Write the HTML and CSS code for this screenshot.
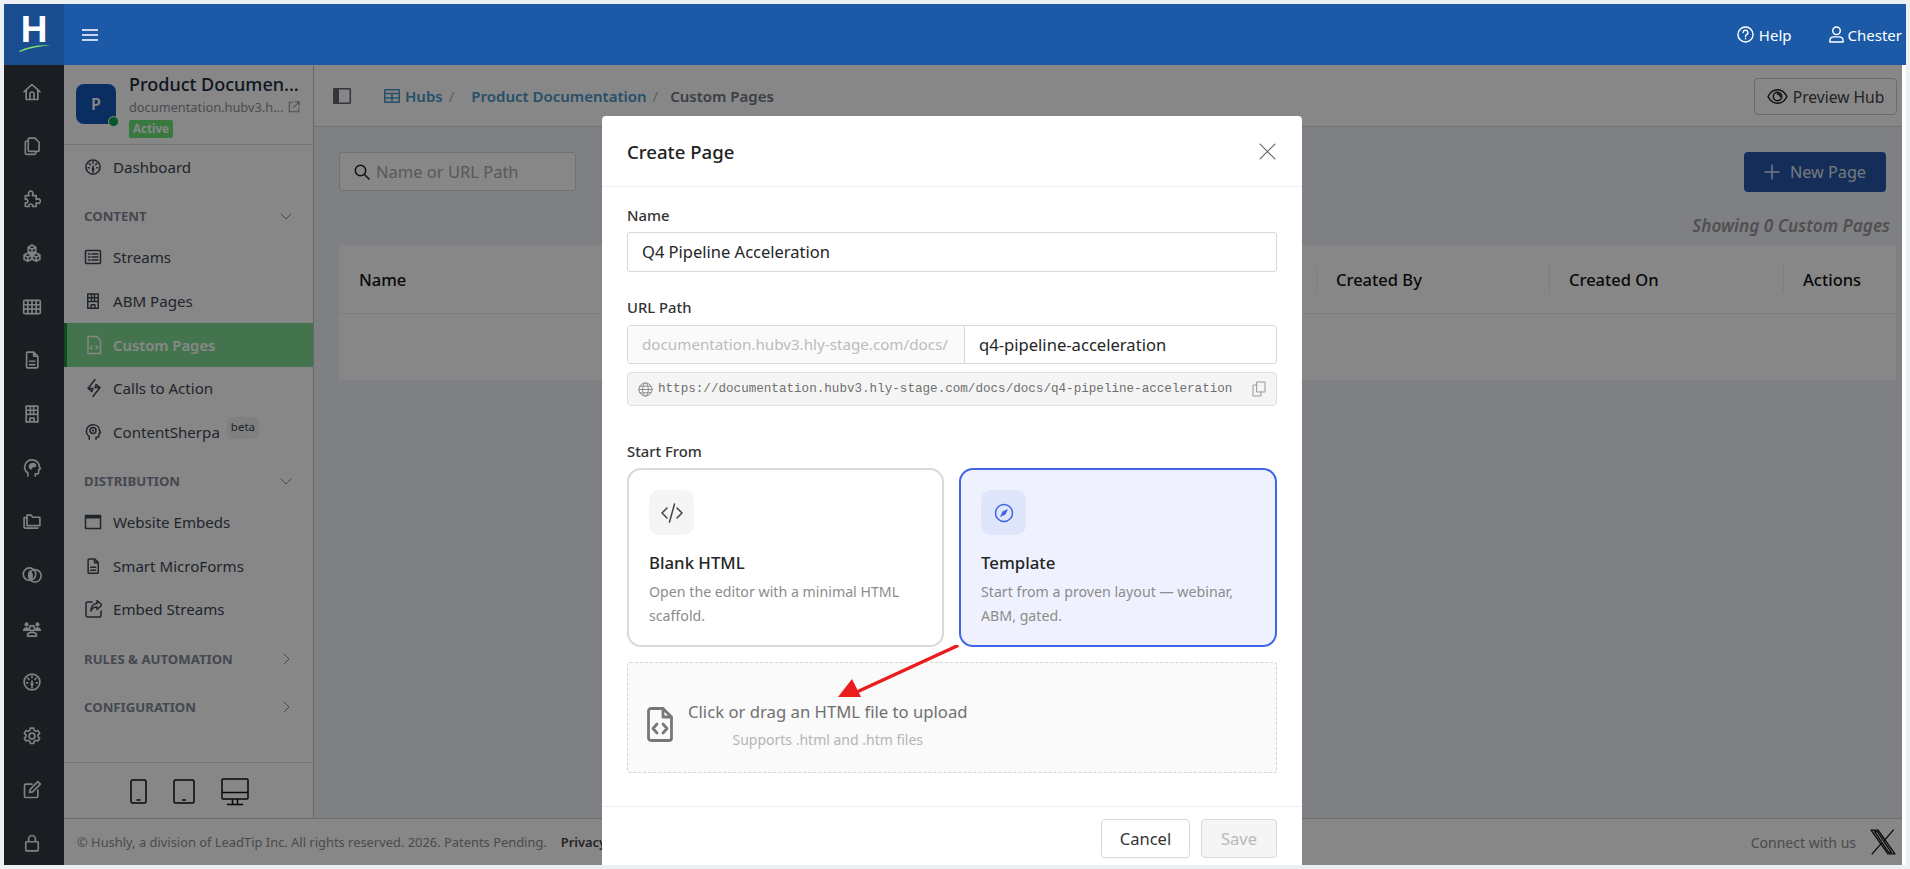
FILE: index.html
```html
<!DOCTYPE html>
<html lang="en">
<head>
  <meta charset="UTF-8" />
  <title>Custom Pages</title>
  <link rel="stylesheet" href="styles.css">
</head>

<body>
  <svg class="icon-defs" width="0" height="0">
    <defs>
      <symbol id="i-home" viewBox="0 0 24 24"><path d="M2.500 11.500 12 3l9.500 8.500M5 9.500V21h14V9.500M9.500 21v-6.500a2.500 2.500 0 0 1 5 0V21"/></symbol>
      <symbol id="i-copy" viewBox="0 0 24 24"><path d="M9 2.500h6.500l5 5V17a1.500 1.500 0 0 1-1.500 1.500H9A1.500 1.500 0 0 1 7.500 17V4A1.500 1.500 0 0 1 9 2.500zM7.500 6H5.500A1.500 1.500 0 0 0 4 7.500V20a2 2 0 0 0 2 2h9a1.500 1.500 0 0 0 1.500-1.500v-2"/></symbol>
      <symbol id="i-puzzle" viewBox="0 0 24 24"><path d="M4 8h4.500C7 5 8 2.500 10.500 2.500S14 5 12.500 8H17v4.500c3-1.500 5-.5 5 2s-2 3.500-5 2V21h-4.500c1-2-.5-3-2-3s-3 1-2 3H4v-4.500c2 .8 3-.5 3-2s-1-2.800-3-2z"/></symbol>
      <symbol id="i-boxes" viewBox="0 0 24 24"><path d="M12 2.500l4.500 2.500v5L12 12.500 7.500 10V5zM7 12l4.500 2.500v5L7 22l-4.500-2.500v-5zM17 12l4.500 2.500v5L17 22l-4.500-2.500v-5zM7.500 5l4.500 2.500L16.500 5M12 7.500v5M2.500 14.500 7 17l4.500-2.500M7 17v5M12.500 14.500 17 17l4.500-2.500M17 17v5"/></symbol>
      <symbol id="i-grid" viewBox="0 0 24 24"><path d="M2 5.500A1.500 1.500 0 0 1 3.500 4h17A1.500 1.500 0 0 1 22 5.500v13a1.500 1.500 0 0 1-1.500 1.500h-17A1.500 1.500 0 0 1 2 18.500zM2 9.300h20M2 14.600h20M7 4v16M12 4v16M17 4v16"/></symbol>
      <symbol id="i-doc" viewBox="0 0 24 24"><path d="M6.500 2.500H14l5 5v13a1 1 0 0 1-1 1H6.500a1 1 0 0 1-1-1v-17a1 1 0 0 1 1-1zM14 2.500v5h5M9 13.500h6.500M9 17.500h6.500"/></symbol>
      <symbol id="i-building" viewBox="0 0 24 24"><path d="M5 2.500h14v19H5zM5 7.500h14M5 12.500h14M10 2.500v10M14 2.500v10M9.500 21.500V17h5v4.500"/></symbol>
      <symbol id="i-head" viewBox="0 0 24 24"><path d="M7 21.500V18C3 15 2.500 11 4 7.500 6 3 10.500 2 14 2.500c4 .6 6.500 4 6.500 7l1.500 3.500-2 1v3a2 2 0 0 1-2 2h-2v2.500"/><path class="fill" d="M8 9c1-3 5-4.500 8-2.500 2 1.500 1.500 4-.5 4.500H13l-2 3.500c-2-1-3.500-3-3-5.500z"/></symbol>
      <symbol id="i-sherpa" viewBox="0 0 24 24"><path d="M7 21.500V18C3 15 2.500 11 4 7.500 6 3 10.500 2 14 2.500c4 .6 6.500 4 6.500 7l1.500 3.500-2 1v3a2 2 0 0 1-2 2h-2v2.500"/><circle cx="12" cy="10" r="4"/><circle class="fill" cx="12" cy="10" r="1.500"/></symbol>
      <symbol id="i-folders" viewBox="0 0 24 24"><path d="M6 5h5l2 2.500h8.500v10H6zM6 8H2.500v10.500a2 2 0 0 0 2 2H19"/></symbol>
      <symbol id="i-circles" viewBox="0 0 24 24"><circle cx="9" cy="11" r="7.500"/><circle cx="15.500" cy="13" r="7.500"/><path class="fill" d="M9 6.500c-2.500 3-2.500 9 2.500 11.500 2.500-3 2.500-9-2.500-11.500z"/></symbol>
      <symbol id="i-users" viewBox="0 0 24 24"><circle class="fill" cx="5.500" cy="6.500" r="2.500"/><circle class="fill" cx="18.500" cy="6.500" r="2.500"/><circle cx="12" cy="11" r="3"/><path class="fill" d="M1 14.500c0-3 2-4.500 4.500-4.500 1.500 0 2.500.5 2.500 1.500 0 1 .5 2 1 3zM23 14.500c0-3-2-4.500-4.500-4.500-1.500 0-2.500.5-2.500 1.500 0 1-.5 2-1 3z"/><path d="M6.500 20.500v-1c0-2.500 2-3.500 5.500-3.500s5.500 1 5.500 3.500v1z"/></symbol>
      <symbol id="i-gauge" viewBox="0 0 24 24"><circle cx="12" cy="12" r="9.500"/><path d="M12 11v8M12 5v2M7 7.500 8.500 9M17 7.500 15.500 9M5.500 13h1.500M17 13h1.500"/><circle class="fill" cx="12" cy="14.500" r="2"/></symbol>
      <symbol id="i-gear" viewBox="0 0 24 24"><circle cx="12" cy="12" r="3.500"/><path d="M10 2.500h4l.6 2.700 2 1 2.600-.9 2 3.500-2 1.800v2.200l2 1.800-2 3.500-2.600-.9-2 1-.6 2.800h-4l-.6-2.800-2-1-2.600.9-2-3.500 2-1.800v-2.200l-2-1.800 2-3.500 2.600.9 2-1z"/></symbol>
      <symbol id="i-edit" viewBox="0 0 24 24"><path d="M12 5H4.500A1.500 1.500 0 0 0 3 6.500v13A1.500 1.500 0 0 0 4.500 21h13a1.500 1.500 0 0 0 1.500-1.500V12M9 15l.8-3.800L19 2l3 3-9.200 9.200z"/></symbol>
      <symbol id="i-lock" viewBox="0 0 24 24"><path d="M4.500 11.500a1 1 0 0 1 1-1h13a1 1 0 0 1 1 1v9a1 1 0 0 1-1 1h-13a1 1 0 0 1-1-1zM8 10.500V7a4 4 0 0 1 8 0v3.500"/></symbol>
    </defs>
  </svg>

  <div class="app">
    <header class="topbar">
      <div class="logo">
        <span class="logo-h">H</span>
        <svg class="logo-swoosh" viewBox="0 0 34 8"><path d="M1 7C10 2.500 22 .5 33 1.500 23 2 12 4 2 8z"/></svg>
      </div>
      <button class="menu-btn" aria-label="Menu">
        <svg viewBox="0 0 16 12"><path d="M.5 1h15M.5 6h15M.5 11h15"/></svg>
      </button>
      <div class="topbar-right">
        <a class="top-link">
          <svg viewBox="0 0 18 18"><circle cx="9" cy="9" r="8"/><path d="M6.500 7a2.500 2.500 0 1 1 3.600 2.200c-.8.4-1.100.9-1.100 1.800M9 13v.6"/></svg>
          Help
        </a>
        <a class="top-link top-user">
          <svg viewBox="0 0 18 18"><circle cx="9" cy="5" r="4"/><path d="M2 17v-1.500C2 13 4 11.500 6.500 11.500h5c2.500 0 4.500 1.500 4.500 4V17z"/></svg>
          Chester
        </a>
      </div>
    </header>

    <div class="below">
      <nav class="rail">
        <a><svg><use href="#i-home"/></svg></a>
        <a><svg><use href="#i-copy"/></svg></a>
        <a><svg><use href="#i-puzzle"/></svg></a>
        <a><svg><use href="#i-boxes"/></svg></a>
        <a><svg><use href="#i-grid"/></svg></a>
        <a><svg><use href="#i-doc"/></svg></a>
        <a><svg><use href="#i-building"/></svg></a>
        <a><svg><use href="#i-head"/></svg></a>
        <a><svg><use href="#i-folders"/></svg></a>
        <a><svg><use href="#i-circles"/></svg></a>
        <a><svg><use href="#i-users"/></svg></a>
        <a><svg><use href="#i-gauge"/></svg></a>
        <a><svg><use href="#i-gear"/></svg></a>
        <a><svg><use href="#i-edit"/></svg></a>
        <a><svg><use href="#i-lock"/></svg></a>
      </nav>

      <div class="workspace">
        <div class="columns">
          <aside class="sidebar">
            <div class="hub-head">
              <div class="hub-avatar">P<span class="hub-dot"></span></div>
              <div class="hub-info">
                <div class="hub-title">Product Documen...</div>
                <div class="hub-url">
                  <span>documentation.hubv3.h...</span>
                  <svg viewBox="0 0 14 14"><path d="M6 1.500H1.500v11h11V8M8.500 1h4.500v4.500M13 1 6.500 7.500"/></svg>
                </div>
                <span class="hub-badge">Active</span>
              </div>
            </div>

            <div class="side-nav">
              <a class="side-item"><svg><use href="#i-gauge"/></svg>Dashboard</a>

              <div class="side-section">CONTENT
                <svg class="chev" viewBox="0 0 12 12"><path d="M1 4l5 5 5-5"/></svg>
              </div>
              <a class="side-item"><svg><path d="M2.500 3.500h13a1 1 0 0 1 1 1v11a1 1 0 0 1-1 1h-13a1 1 0 0 1-1-1v-11a1 1 0 0 1 1-1zM4.500 7h1.500M4.500 10h1.500M4.500 13h1.500M8 7h6M8 10h6M8 13h6"/></svg>Streams</a>
              <a class="side-item"><svg><use href="#i-building"/></svg>ABM Pages</a>
              <a class="side-item is-active"><svg><path d="M4 1.500h8.500l4 4v13h-12.500zM8 11l-1.500 1.500L8 14M12 11l1.500 1.500L12 14"/></svg>Custom Pages</a>
              <a class="side-item"><svg><path d="M11 1.500 4 10.500h5l-1.500 3M9 18.500l7-9h-5l1.500-3M4 10.500l4 3M16 9.500l-4-3"/></svg>Calls to Action</a>
              <a class="side-item"><svg><use href="#i-sherpa"/></svg>ContentSherpa<span class="beta">beta</span></a>

              <div class="side-section">DISTRIBUTION
                <svg class="chev" viewBox="0 0 12 12"><path d="M1 4l5 5 5-5"/></svg>
              </div>
              <a class="side-item"><svg><path class="fill" d="M1.500 3.500h15v3h-15z"/><path d="M1.500 3.500h15v13h-15z"/></svg>Website Embeds</a>
              <a class="side-item"><svg><use href="#i-doc"/></svg>Smart MicroForms</a>
              <a class="side-item"><svg><path d="M8 3H3.500A1.500 1.500 0 0 0 2 4.500v12A1.500 1.500 0 0 0 3.500 18h12a1.500 1.500 0 0 0 1.500-1.500V12M13 1.500 18 6l-5 4.500V8c-3 0-5 1-6 4 0-4 2-7.500 6-7.500z"/></svg>Embed Streams</a>

              <div class="side-section side-section-gap">RULES &amp; AUTOMATION
                <svg class="chev" viewBox="0 0 12 12"><path d="M4 1l5 5-5 5"/></svg>
              </div>
              <div class="side-section side-section-gap">CONFIGURATION
                <svg class="chev" viewBox="0 0 12 12"><path d="M4 1l5 5-5 5"/></svg>
              </div>
            </div>

            <div class="devices">
              <svg class="dev-phone" viewBox="0 0 17 25"><path d="M2.500 1h12a1.500 1.500 0 0 1 1.500 1.500v20a1.500 1.500 0 0 1-1.500 1.500h-12A1.500 1.500 0 0 1 1 22.500v-20A1.500 1.500 0 0 1 2.500 1zM7 21h3"/></svg>
              <svg class="dev-tablet" viewBox="0 0 22 25"><path d="M2.500 1h17A1.500 1.500 0 0 1 21 2.500v20a1.500 1.500 0 0 1-1.500 1.500h-17A1.500 1.500 0 0 1 1 22.500v-20A1.500 1.500 0 0 1 2.500 1zM9.500 21h3"/></svg>
              <svg class="dev-desktop" viewBox="0 0 28 28"><path d="M2 1h24a1 1 0 0 1 1 1v18a1 1 0 0 1-1 1H2a1 1 0 0 1-1-1V2a1 1 0 0 1 1-1zM1 14.500h26M11.500 21v5M16.500 21v5M6.500 26.500h15"/></svg>
            </div>
          </aside>

          <main class="main">
            <div class="crumbs">
              <svg class="panel-icon" viewBox="0 0 18 16"><path d="M1.500.7h15a.8.8 0 0 1 .8.8v13a.8.8 0 0 1-.8.8h-15a.8.8 0 0 1-.8-.8v-13a.8.8 0 0 1 .8-.8z"/><path class="fill" d="M1 1h5v14H1z"/></svg>
              <svg class="hubs-icon" viewBox="0 0 16 14"><path d="M.7 1.500a.8.8 0 0 1 .8-.8h13a.8.8 0 0 1 .8.8v11a.8.8 0 0 1-.8.800h-13a.8.8 0 0 1-.8-.8zM1 4.500h14M1 9h14M8 4.500v9"/></svg>
              <a class="crumb">Hubs</a>
              <span class="crumb-sep">/</span>
              <a class="crumb crumb-second">Product Documentation</a>
              <span class="crumb-sep">/</span>
              <span class="crumb-current">Custom Pages</span>
              <button class="preview-btn">
                <svg viewBox="0 0 20 16"><path d="M1 8c2-4 5-6.500 9-6.500S17 4 19 8c-2 4-5 6.500-9 6.500S3 12 1 8z"/><circle cx="10" cy="8" r="4"/><path d="M10 5.500A2.500 2.500 0 0 1 12.500 8" /></svg>
                Preview Hub
              </button>
            </div>

            <div class="page">
              <div class="toolbar">
                <label class="search">
                  <svg viewBox="0 0 16 16"><circle cx="6.500" cy="6.500" r="5.200"/><path d="M10.500 10.500 15 15"/></svg>
                  <span>Name or URL Path</span>
                </label>
                <button class="new-btn">
                  <svg viewBox="0 0 16 16"><path d="M8 1v14M1 8h14"/></svg>
                  New Page
                </button>
              </div>
              <div class="showing">Showing 0 Custom Pages</div>
              <div class="table">
                <div class="th">Name</div>
                <div class="th th-line">Created By</div>
                <div class="th th-line">Created On</div>
                <div class="th th-line">Actions</div>
                <div class="table-empty"></div>
              </div>
            </div>
          </main>
        </div>

        <footer class="footer">
          <span>© Hushly, a division of LeadTip Inc. All rights reserved. 2026. Patents Pending.</span>
          <a class="footer-link">Privacy Policy</a>
          <span class="footer-connect">Connect with us</span>
          <svg class="x-logo" viewBox="0 0 24 24"><path d="M1 1h6.500l15.500 22h-6.500zM4.200 2.500 17.300 21.500h2.500L6.700 2.500zM21.500 1 13.500 10.300M2 23l8.700-10"/></svg>
        </footer>
      </div>

      <!-- dim layer + dialog -->
      <div class="backdrop">
        <div class="modal">
          <div class="modal-head">
            <h2>Create Page</h2>
            <svg class="modal-close" viewBox="0 0 16 16"><path d="M1 1l14 14M15 1 1 15"/></svg>
          </div>

          <div class="modal-body">
            <div class="field-label">Name</div>
            <div class="input">Q4 Pipeline Acceleration</div>

            <div class="field-label label-url">URL Path</div>
            <div class="url-group">
              <div class="url-prefix">documentation.hubv3.hly-stage.com/docs/</div>
              <div class="url-slug">q4-pipeline-acceleration</div>
            </div>
            <div class="url-preview">
              <svg class="globe" viewBox="0 0 16 16"><circle cx="8" cy="8" r="7"/><ellipse cx="8" cy="8" rx="3" ry="7"/><path d="M1 8h14M2 4.500h12M2 11.500h12"/></svg>
              <span class="url-full">https://documentation.hubv3.hly-stage.com/docs/docs/q4-pipeline-acceleration</span>
              <svg class="copy" viewBox="0 0 14 16"><path d="M5 1h8v10H5zM5 4H1v11h8v-4"/></svg>
            </div>

            <div class="field-label label-start">Start From</div>
            <div class="cards">
              <div class="card">
                <div class="card-icon">
                  <svg viewBox="0 0 24 20"><path d="M7 5 2 10l5 5M17 5l5 5-5 5M14.500 1 9.500 19"/></svg>
                </div>
                <div class="card-title">Blank HTML</div>
                <div class="card-desc">Open the editor with a minimal HTML scaffold.</div>
              </div>
              <div class="card card-selected">
                <div class="card-icon">
                  <svg viewBox="0 0 20 20"><circle cx="10" cy="10" r="8.500"/><path class="fill" d="M14 6l-2.500 5.500L6 14l2.500-5.500z"/></svg>
                </div>
                <div class="card-title">Template</div>
                <div class="card-desc">Start from a proven layout — webinar, ABM, gated.</div>
              </div>
            </div>

            <div class="dropzone">
              <svg viewBox="0 0 26 35"><path d="M4 1.500h12l8.500 8.500v21a2.500 2.500 0 0 1-2.500 2.500H4A2.500 2.500 0 0 1 1.500 31V4A2.500 2.500 0 0 1 4 1.500zM16 1.500V10h8.500M10 17l-4 4.500 4 4.500M16 17l4 4.500-4 4.500"/></svg>
              <div class="drop-text">
                <div class="drop-main">Click or drag an HTML file to upload</div>
                <div class="drop-sub">Supports .html and .htm files</div>
              </div>
            </div>
          </div>

          <div class="modal-foot">
            <button class="btn-cancel">Cancel</button>
            <button class="btn-save">Save</button>
          </div>

          <!-- annotation arrow -->
          <svg class="arrow" viewBox="0 0 122 55"><path d="M120 1 22 46"/><path class="arrow-head" d="M1 52 15 34 24 52z"/></svg>
        </div>
      </div>
    </div>
  </div>
</body>
</html>
```

FILE: styles.css
```css
* {
  box-sizing: border-box;
}

body {
  margin: 0;
  padding: 4px;
  height: 869px;
  overflow: hidden;
  background: #edf0f3;
  font-family: "Noto Sans", "Open Sans", sans-serif;
  font-size: 14px;
  color: #212529;
}

button {
  font-family: inherit;
}

svg {
  fill: none;
  stroke: currentColor;
  stroke-width: 1.5;
  stroke-linecap: round;
  stroke-linejoin: round;
}

.fill {
  fill: currentColor;
  stroke: none;
}

.icon-defs {
  position: absolute;
}

.app {
  height: 861px;
  display: flex;
  flex-direction: column;
}

/* top bar */
.topbar {
  height: 61px;
  flex-shrink: 0;
  display: flex;
  align-items: center;
  background: #1c5aa8;
  color: #fff;
}

.logo {
  position: relative;
  width: 60px;
  height: 61px;
  background: #1a4c90;
  text-align: center;
}

.logo-h {
  display: block;
  font-family: "Liberation Sans", sans-serif;
  font-weight: 700;
  font-size: 37px;
  line-height: 47px;
  padding-top: 2px;
}

.logo-swoosh {
  position: absolute;
  left: 14px;
  top: 40px;
  width: 33px;
  height: 8px;
  fill: #7be06b;
  stroke: none;
}

.menu-btn {
  width: 16px;
  height: 12px;
  margin-left: 18px;
  padding: 0;
  border: 0;
  background: none;
  color: #fff;
  display: flex;
}

.menu-btn svg {
  width: 16px;
  height: 12px;
  stroke-width: 1.6;
}

.topbar-right {
  margin-left: auto;
  display: flex;
  align-items: center;
  gap: 36px;
  font-size: 15px;
  padding-right: 4px;
}

.top-link {
  display: flex;
  align-items: center;
  gap: 5px;
}

.top-link svg {
  width: 17px;
  height: 17px;
}

.top-user {
  gap: 3px;
}

/* rail + workspace */
.below {
  position: relative;
  flex: 1;
  display: flex;
  min-height: 0;
  padding-right: 4px;
  background: #fff;
  overflow: hidden;
}

.rail {
  width: 60px;
  flex-shrink: 0;
  background: #31373f;
  color: #f2f3f5;
  display: flex;
  flex-direction: column;
}

.rail a {
  height: 53.7px;
  flex-shrink: 0;
  display: flex;
  align-items: center;
  justify-content: center;
  padding-right: 4px;
}

.rail svg {
  width: 20px;
  height: 20px;
}

.rail use {
  stroke-width: 2;
}

.workspace {
  flex: 1;
  min-width: 0;
  display: flex;
  flex-direction: column;
}

.columns {
  flex: 1;
  min-height: 0;
  display: flex;
}

/* sidebar */
.sidebar {
  width: 250px;
  flex-shrink: 0;
  display: flex;
  flex-direction: column;
  background: #fff;
  border-right: 1px solid #c2c2c2;
  box-shadow: 2px 0 4px rgba(0, 0, 0, 0.1);
}

.hub-head {
  height: 80px;
  display: flex;
  gap: 13px;
  padding: 19px 0 0 12px;
  border-bottom: 1px solid #dcdcdc;
}

.hub-avatar {
  position: relative;
  width: 40px;
  height: 40px;
  border-radius: 8px;
  background: #1658b8;
  color: #fff;
  font-size: 16px;
  font-weight: 600;
  display: flex;
  align-items: center;
  justify-content: center;
}

.hub-dot {
  position: absolute;
  right: -3px;
  bottom: -3px;
  width: 11px;
  height: 11px;
  border-radius: 50%;
  background: #0aa84f;
  border: 1px solid #fff;
}

.hub-info {
  width: 171px;
  margin-top: -11px;
}

.hub-title {
  font-size: 18px;
  font-weight: 500;
  line-height: 23px;
  color: #1b2a41;
  white-space: nowrap;
}

.hub-url {
  display: flex;
  align-items: center;
  justify-content: space-between;
  font-size: 12.8px;
  line-height: 18px;
  margin-top: 2px;
  color: #8e9298;
  white-space: nowrap;
}

.hub-url svg {
  width: 12px;
  height: 12px;
  stroke-width: 1.2;
}

.hub-badge {
  display: block;
  width: 44px;
  height: 18px;
  margin-top: 4px;
  border-radius: 2px;
  background: #68e476;
  color: #fff;
  font-size: 11.5px;
  font-weight: 700;
  line-height: 18px;
  text-align: center;
}

.side-nav {
  flex: 1;
}

.side-item {
  height: 43.5px;
  display: flex;
  align-items: center;
  padding-left: 20px;
  font-size: 15.1px;
  color: #3d4654;
}

.side-item svg {
  width: 18px;
  height: 20px;
  margin-right: 11px;
  flex-shrink: 0;
}

.side-item use {
  stroke-width: 2;
}

.side-item.is-active {
  height: 44px;
  padding-left: 17px;
  border-left: 3px solid #1f8f3d;
  background: #7fdc92;
  color: #fff;
  font-weight: 600;
  font-size: 14.8px;
}

.beta {
  align-self: flex-start;
  margin: 7px 0 0 7px;
  padding: 0 4px;
  height: 22px;
  line-height: 20px;
  border-radius: 5px;
  background: #f2f2f2;
  font-size: 11.5px;
}

.side-section {
  height: 40px;
  margin-top: 7px;
  display: flex;
  align-items: center;
  padding-left: 20px;
  font-size: 13.2px;
  font-weight: 700;
  color: #828996;
}

.side-section-gap {
  margin-top: 8px;
}

.chev {
  width: 12px;
  height: 12px;
  margin-left: auto;
  margin-right: 21px;
  stroke-width: 1;
}

.devices {
  height: 56px;
  display: flex;
  align-items: center;
  padding: 2px 0 0 66px;
  gap: 26px;
  border-top: 1px solid #dedede;
  color: #111;
}

.devices svg {
  flex-shrink: 0;
}

.dev-phone {
  width: 17px;
  height: 25px;
}

.dev-tablet {
  width: 22px;
  height: 25px;
}

.dev-desktop {
  width: 28px;
  height: 28px;
}

/* main column */
.main {
  flex: 1;
  min-width: 0;
  display: flex;
  flex-direction: column;
  background: #eef1f9;
}

.crumbs {
  height: 62px;
  flex-shrink: 0;
  display: flex;
  align-items: center;
  padding: 0 5px 0 19px;
  background: #fff;
  border-bottom: 1px solid #d9d9d9;
  font-size: 15px;
  font-weight: 600;
}

.panel-icon {
  width: 18px;
  height: 16px;
  color: #5f6672;
  margin-right: 33px;
}

.hubs-icon {
  width: 16px;
  height: 14px;
  margin-right: 5px;
  color: #4b96c8;
}

.crumb {
  color: #4b96c8;
}

.crumb-sep {
  margin: 0 12px 0 6px;
  color: #b5b5b5;
  font-weight: 400;
}

.crumb-second {
  margin-left: 5px;
}

.crumb-current {
  color: #6e7783;
}

.preview-btn {
  margin: 2px 0 0 auto;
  width: 143px;
  height: 37px;
  display: flex;
  align-items: center;
  justify-content: center;
  gap: 5px;
  background: #fff;
  border: 1px solid #c8c8c8;
  border-radius: 4px;
  color: #444;
  font-size: 15.6px;
}

.preview-btn svg {
  width: 21px;
  height: 17px;
  color: #222;
}

.page {
  flex: 1;
  padding: 25px 6px 0 25px;
}

.toolbar {
  display: flex;
  justify-content: space-between;
  padding-right: 10px;
}

.search {
  width: 237px;
  height: 39px;
  display: flex;
  align-items: center;
  gap: 6px;
  padding-left: 14px;
  background: #fff;
  border: 1px solid #d4d4d4;
  border-radius: 3px;
  color: #a9a9a9;
  font-size: 16.5px;
}

.search svg {
  width: 16px;
  height: 16px;
  color: #222;
}

.new-btn {
  width: 142px;
  height: 40px;
  display: flex;
  align-items: center;
  justify-content: center;
  gap: 10px;
  background: #2658a8;
  border: 0;
  border-radius: 4px;
  color: #dde3ec;
  font-size: 16.2px;
}

.new-btn svg {
  width: 16px;
  height: 16px;
}

.showing {
  margin-top: 24px;
  padding-right: 6px;
  text-align: right;
  font-size: 17.2px;
  font-style: italic;
  font-weight: 600;
  line-height: 20px;
  color: #989898;
}

.table {
  margin-top: 9px;
  display: grid;
  grid-template-columns: 977px 233px 234px 113px;
  grid-template-rows: 68px 67px;
  background: #fff;
}

.th {
  display: flex;
  align-items: center;
  padding-left: 20px;
  font-size: 16.5px;
  font-weight: 500;
  color: #111;
  position: relative;
}

.th-line::before {
  content: "";
  position: absolute;
  left: 0;
  top: 20px;
  bottom: 20px;
  width: 1px;
  background: #ececec;
}

.table-empty {
  grid-column: 1 / -1;
  border-top: 1px solid #efefef;
}

/* footer */
.footer {
  height: 47px;
  flex-shrink: 0;
  display: flex;
  align-items: center;
  padding: 0 6px 0 13px;
  background: #fff;
  border-top: 1px solid #cfcfd4;
  font-size: 12.9px;
  color: #8e8e8e;
}

.footer-link {
  margin-left: 14px;
  font-weight: 600;
  color: #444;
}

.footer-connect {
  margin-left: auto;
  margin-right: 14px;
  font-size: 14px;
}

.x-logo {
  width: 26px;
  height: 26px;
  color: #111;
  stroke-width: 1.2;
}

/* dim layer + modal */
.backdrop {
  position: absolute;
  inset: 0 4px 0 0;
  background: rgba(0, 0, 0, 0.47);
  overflow: hidden;
}

.modal {
  position: relative;
  width: 700px;
  height: 800px;
  margin: 51px 0 0 598px;
  background: #fff;
  border-radius: 4px 4px 0 0;
}

.modal-head {
  height: 71px;
  display: flex;
  align-items: center;
  justify-content: space-between;
  padding: 0 26px 0 25px;
  border-bottom: 1px solid #eeeeee;
}

.modal-head h2 {
  margin: 0;
  font-size: 18.6px;
  font-weight: 500;
  color: #212121;
}

.modal-close {
  width: 17px;
  height: 17px;
  color: #666;
  stroke-width: 1.1;
}

.modal-body {
  padding: 19px 25px 0;
}

.field-label {
  height: 20px;
  line-height: 18px;
  font-size: 14.8px;
  font-weight: 500;
  color: #333;
}

.input {
  height: 40px;
  margin-top: 6px;
  padding-left: 14px;
  line-height: 38px;
  border: 1px solid #d9d9d9;
  border-radius: 3px;
  font-size: 16.5px;
  color: #262626;
}

.label-url {
  margin-top: 26px;
}

.url-group {
  height: 39px;
  margin-top: 7px;
  display: flex;
  border: 1px solid #d9d9d9;
  border-radius: 3px;
  line-height: 37px;
}

.url-prefix {
  width: 337px;
  padding-left: 14px;
  background: #fafafa;
  border-right: 1px solid #d9d9d9;
  font-size: 15.2px;
  color: #bcbcbc;
  white-space: nowrap;
}

.url-slug {
  padding-left: 14px;
  font-size: 16.6px;
  color: #262626;
}

.url-preview {
  height: 34px;
  margin-top: 8px;
  display: flex;
  align-items: center;
  padding: 0 10px;
  background: #f5f5f5;
  border: 1px solid #e0e0e0;
  border-radius: 4px;
  color: #888;
}

.globe {
  width: 15px;
  height: 15px;
  flex-shrink: 0;
  stroke-width: 1;
}

.url-full {
  margin-left: 5px;
  font-family: "Liberation Mono", monospace;
  font-size: 12.6px;
  color: #6f6f6f;
  white-space: nowrap;
}

.copy {
  width: 14px;
  height: 16px;
  margin-left: auto;
  stroke-width: 1;
  color: #9a9a9a;
}

.label-start {
  margin-top: 36px;
}

.cards {
  margin-top: 6px;
  display: grid;
  grid-template-columns: 317px 318px;
  gap: 15px;
}

.card {
  height: 179px;
  padding: 20px 20px 0;
  border: 2px solid #d9d9d9;
  border-radius: 14px;
}

.card-selected {
  border-color: #3f66e8;
  background: #eff2fe;
}

.card-icon {
  width: 45px;
  height: 45px;
  display: flex;
  align-items: center;
  justify-content: center;
  border-radius: 10px;
  background: #f5f5f5;
  color: #444;
}

.card-icon svg {
  width: 24px;
  height: 20px;
}

.card-selected .card-icon {
  background: #dfe5fb;
  color: #3f66e8;
}

.card-selected .card-icon svg {
  width: 20px;
  height: 20px;
}

.card-title {
  margin-top: 16px;
  font-size: 16.8px;
  font-weight: 500;
  line-height: 24px;
  color: #262626;
}

.card-desc {
  margin-top: 5px;
  font-size: 14.2px;
  line-height: 23.5px;
  color: #8c8c8c;
}

.dropzone {
  height: 111px;
  margin-top: 15px;
  display: flex;
  align-items: center;
  gap: 15px;
  padding: 14px 0 0 19px;
  background: #fafafa;
  border: 1px dashed #d4d4d4;
  border-radius: 3px;
}

.dropzone svg {
  width: 26px;
  height: 35px;
  color: #777;
  stroke-width: 2.8;
}

.drop-text {
  text-align: center;
}

.drop-main {
  font-size: 16.7px;
  line-height: 26px;
  color: #707070;
}

.drop-sub {
  margin-top: 5px;
  font-size: 14px;
  line-height: 20px;
  color: #b5b5b5;
}

.modal-foot {
  height: 60px;
  margin-top: 33px;
  display: flex;
  justify-content: flex-end;
  gap: 11px;
  padding: 12px 25px 0;
  border-top: 1px solid #eeeeee;
}

.modal-foot button {
  height: 39px;
  border-radius: 4px;
  font-size: 16.5px;
}

.btn-cancel {
  width: 89px;
  background: #fff;
  border: 1px solid #d9d9d9;
  color: #333;
  box-shadow: 0 2px 0 rgba(0, 0, 0, 0.02);
}

.btn-save {
  width: 76px;
  background: #f5f5f5;
  border: 1px solid #d9d9d9;
  color: #b8b8b8;
}

.arrow {
  position: absolute;
  left: 235px;
  top: 529px;
  width: 122px;
  height: 55px;
  color: #ea1c1c;
  stroke-width: 3.4;
}

.arrow-head {
  fill: currentColor;
  stroke: none;
}
```
